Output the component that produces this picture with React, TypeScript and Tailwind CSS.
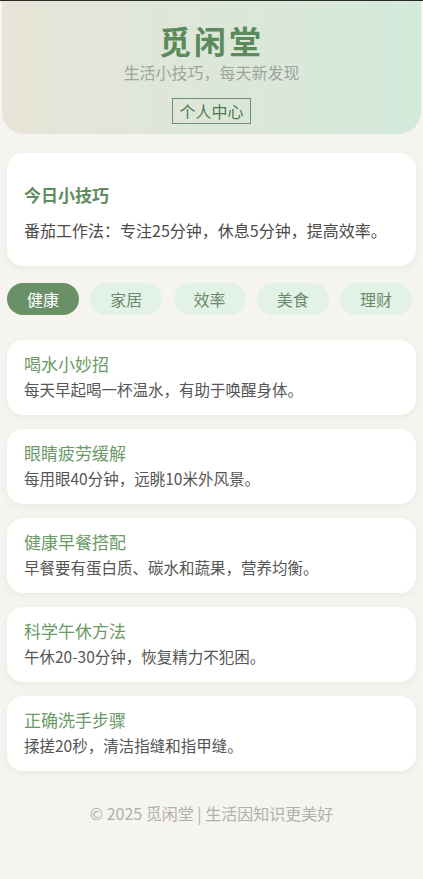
const tabs = ["健康", "家居", "效率", "美食", "理财"];

const tips = [
  { title: "喝水小妙招", desc: "每天早起喝一杯温水，有助于唤醒身体。" },
  { title: "眼睛疲劳缓解", desc: "每用眼40分钟，远眺10米外风景。" },
  { title: "健康早餐搭配", desc: "早餐要有蛋白质、碳水和蔬果，营养均衡。" },
  { title: "科学午休方法", desc: "午休20-30分钟，恢复精力不犯困。" },
  { title: "正确洗手步骤", desc: "揉搓20秒，清洁指缝和指甲缝。" },
];

export default function App() {
  return (
    <div className="min-h-[879px] bg-[#f6f4ef] font-['Noto_Sans_CJK_SC','Noto_Sans',sans-serif]">
      <div className="h-px bg-[#2a2a2a]" />
      {/* Header */}
      <header className="mx-[2px] rounded-b-[22px] bg-gradient-to-r from-[#e6e4d7] to-[#d3eadb] pt-[18px] pb-[10px] text-center">
        <h1 className="text-[32px] font-bold leading-[42px] tracking-[3px] text-[#5b8a5b]">觅闲堂</h1>
        <p className="text-[16px] leading-[22px] text-[#a0a39c]">生活小技巧，每天新发现</p>
        <button className="mx-auto mt-[15px] block border-[1.5px] border-[#6a9468] px-[6px] text-[16px] leading-[24px] text-[#4f7a4f]">
          个人中心
        </button>
      </header>

      <main className="px-[7px]">
        {/* Today tip */}
        <section className="mt-[19px] rounded-[16px] bg-white px-[17px] pt-[30px] pb-[24px] shadow-[0_2px_8px_rgba(0,0,0,0.05)]">
          <h2 className="text-[17px] font-bold leading-[24px] text-[#5e8c5e]">今日小技巧</h2>
          <p className="mt-[11px] text-[16px] leading-[24px] text-[#4a4a4a]">
            番茄工作法：专注25分钟，休息5分钟，提高效率。
          </p>
        </section>

        {/* Category tabs */}
        <nav className="mt-[17px] flex justify-between pr-[4px]">
          {tabs.map((t, i) => (
            <button
              key={t}
              className={
                i === 0
                  ? "h-[32px] w-[72px] rounded-full bg-[#6a9068] text-[16px] text-white"
                  : "h-[32px] w-[72px] rounded-full bg-[#e3f2e6] text-[16px] text-[#6b8a6b]"
              }
            >
              {t}
            </button>
          ))}
        </nav>

        {/* Tip list */}
        <div className="mt-[25px] flex flex-col gap-[14px]">
          {tips.map((tip) => (
            <div
              key={tip.title}
              className="h-[75px] rounded-[16px] bg-white px-[17px] pt-[12px] shadow-[0_2px_8px_rgba(0,0,0,0.05)]"
            >
              <h3 className="text-[17px] leading-[24px] text-[#6a9a66]">{tip.title}</h3>
              <p className="mt-[2px] text-[15.5px] leading-[22px] text-[#555555]">{tip.desc}</p>
            </div>
          ))}
        </div>
      </main>

      <footer className="mt-[31px] text-center text-[16px] leading-[22px] text-[#b0b0ac]">
        © 2025 觅闲堂 | 生活因知识更美好
      </footer>
    </div>
  );
}
